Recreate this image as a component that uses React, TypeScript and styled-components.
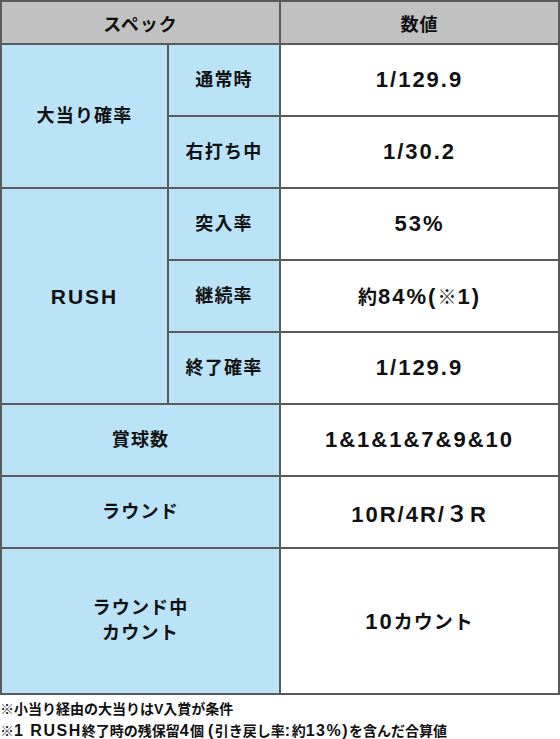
import { FC } from "react";
import styled, { createGlobalStyle } from "styled-components";

const GlobalStyle = createGlobalStyle`
  html, body {
    margin: 0;
    padding: 0;
    background: #ffffff;
  }
  body {
    font-family: "Liberation Sans", "Noto Sans CJK JP", sans-serif;
    color: #111;
  }
`;

const App: FC = () => {
  return (
    <Wrapper>
      <GlobalStyle />
      <SpecTable>
        <colgroup>
          <col style={{ width: 167 }} />
          <col style={{ width: 112 }} />
          <col />
        </colgroup>
        <tbody>
          <HeadRow>
            <HeadCell colSpan={2}>スペック</HeadCell>
            <HeadCell>数値</HeadCell>
          </HeadRow>
          <BodyRow>
            <LabelCell rowSpan={2}>大当り確率</LabelCell>
            <LabelCell>通常時</LabelCell>
            <ValueCell>1/129.9</ValueCell>
          </BodyRow>
          <BodyRow>
            <LabelCell>右打ち中</LabelCell>
            <ValueCell>1/30.2</ValueCell>
          </BodyRow>
          <BodyRow>
            <LabelCell rowSpan={3} $latin>
              RUSH
            </LabelCell>
            <LabelCell>突入率</LabelCell>
            <ValueCell>53%</ValueCell>
          </BodyRow>
          <BodyRow>
            <LabelCell>継続率</LabelCell>
            <ValueCell>
              <Jp>約</Jp>84%(<Jp>※</Jp>1)
            </ValueCell>
          </BodyRow>
          <BodyRow>
            <LabelCell>終了確率</LabelCell>
            <ValueCell>1/129.9</ValueCell>
          </BodyRow>
          <BodyRow>
            <LabelCell colSpan={2}>賞球数</LabelCell>
            <ValueCell>1&amp;1&amp;1&amp;7&amp;9&amp;10</ValueCell>
          </BodyRow>
          <BodyRow>
            <LabelCell colSpan={2}>ラウンド</LabelCell>
            <ValueCell>10R/4R/３R</ValueCell>
          </BodyRow>
          <BodyRow $tall>
            <LabelCell colSpan={2}>
              ラウンド中
              <br />
              カウント
            </LabelCell>
            <ValueCell>
              10<Jp>カウント</Jp>
            </ValueCell>
          </BodyRow>
        </tbody>
      </SpecTable>
      <Notes>
        <Note>※小当り経由の大当りはV入賞が条件</Note>
        <Note>
          ※<Lat>1 RUSH</Lat>終了時の残保留<Lat>4</Lat>個 <Lat>(</Lat>引き戻し率
          <Lat>:</Lat>約<Lat>13%)</Lat>を含んだ合算値
        </Note>
      </Notes>
    </Wrapper>
  );
};

export default App;

const Wrapper = styled.div`
  width: 560px;
  display: flex;
  flex-direction: column;
`;
const SpecTable = styled.table`
  width: 560px;
  table-layout: fixed;
  border-collapse: collapse;
  border: 2px solid #3c3c3c;

  td {
    border: 2px solid #5a5a5a;
    text-align: center;
    vertical-align: middle;
    font-weight: 700;
    padding: 0;
  }
`;
const HeadRow = styled.tr`
  height: 43px;
`;
const BodyRow = styled.tr<{ $tall?: boolean }>`
  height: ${(p) => (p.$tall ? "146px" : "72px")};
`;
const HeadCell = styled.td`
  background: #c1c1c1;
  font-size: 18px;
  letter-spacing: 1px;
`;
const LabelCell = styled.td<{ $latin?: boolean }>`
  background: #bbe3f8;
  font-size: ${(p) => (p.$latin ? "21px" : "18px")};
  letter-spacing: ${(p) => (p.$latin ? "2px" : "1.2px")};
  line-height: 25px;
`;
const ValueCell = styled.td`
  background: #ffffff;
  font-size: 22px;
  letter-spacing: 2px;
`;
const Jp = styled.span`
  font-size: 19px;
  letter-spacing: 1px;
`;
const Notes = styled.div`
  display: flex;
  flex-direction: column;
  padding-top: 3px;
`;
const Note = styled.div`
  font-size: 14px;
  font-weight: 700;
  line-height: 22px;
  white-space: nowrap;
`;
const Lat = styled.span`
  font-size: 16px;
  letter-spacing: 1.5px;
`;
